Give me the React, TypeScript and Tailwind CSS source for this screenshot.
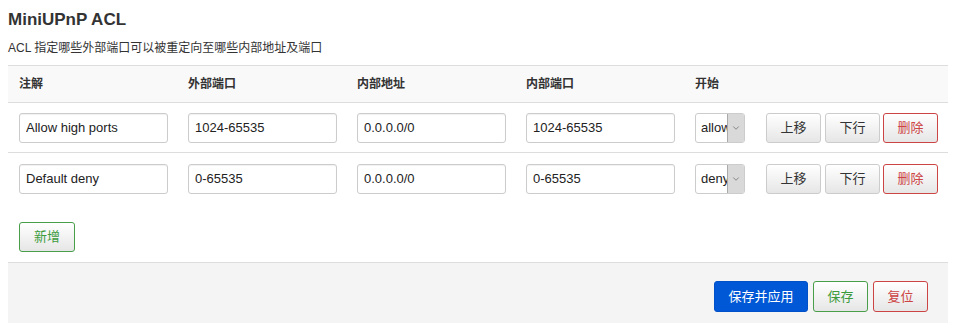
import { ChevronDown } from "lucide-react";

type Rule = { comment: string; extPort: string; intAddr: string; intPort: string; action: string };

const rules: Rule[] = [
  { comment: "Allow high ports", extPort: "1024-65535", intAddr: "0.0.0.0/0", intPort: "1024-65535", action: "allow" },
  { comment: "Default deny", extPort: "0-65535", intAddr: "0.0.0.0/0", intPort: "0-65535", action: "deny" },
];

const font = "font-['Liberation_Sans','Noto_Sans_CJK_SC',sans-serif]";
const grid = "grid grid-cols-[169px_169px_169px_169px_71px_1fr] pl-[11px]";
const inputCls =
  "h-[30px] w-[149px] rounded-[3px] border border-[#ccc] bg-white px-[6px] text-[13px] text-[#222] shadow-[inset_0_1px_1px_rgba(0,0,0,0.06)] outline-none";
const btnBase =
  "h-[30px] w-[55px] rounded-[3px] border bg-gradient-to-b from-white to-[#e6e6e6] text-[13px]";

function TextCell({ value }: { value: string }) {
  return <input className={inputCls} defaultValue={value} readOnly />;
}

function Row({ rule, last }: { rule: Rule; last?: boolean }) {
  return (
    <div className={`${grid} items-center ${last ? "h-[51px]" : "h-[50px] border-b border-[#ddd]"}`}>
      <TextCell value={rule.comment} />
      <TextCell value={rule.extPort} />
      <TextCell value={rule.intAddr} />
      <TextCell value={rule.intPort} />
      <div className="flex h-[30px] w-[50px] overflow-hidden rounded-[3px] border border-[#ccc] bg-white">
        <span className="flex flex-1 items-center overflow-hidden whitespace-nowrap pl-[5px] text-[13px] text-[#222]">{rule.action}</span>
        <span className="flex w-[17px] shrink-0 items-center justify-center border-l border-[#aaa] bg-[#d9d9d9] text-[#555]">
          <ChevronDown size={10} strokeWidth={1.5} />
        </span>
      </div>
      <div className="flex gap-[4px]">
        <button className={`${btnBase} border-[#ccc] text-[#333]`}>上移</button>
        <button className={`${btnBase} border-[#ccc] text-[#333]`}>下行</button>
        <button className={`${btnBase} ml-[-1px] border-[#c44] text-[#c44]`}>删除</button>
      </div>
    </div>
  );
}

export default function App() {
  return (
    <div className={`${font} h-[323px] w-[955px] overflow-hidden bg-white pl-2 pr-[7px] pt-[9px] text-[#333]`}>
      <h2 className="text-[17px] font-bold leading-[22px] text-[#333]">MiniUPnP ACL</h2>
      <p className="mt-[9px] text-[12px] leading-[16px] text-[#333]">ACL 指定哪些外部端口可以被重定向至哪些内部地址及端口</p>

      <div className="mt-[9px]">
        <div className={`${grid} h-[38px] items-center border-y border-[#ddd] bg-[#f9f9f9] text-[12px] font-bold text-[#333]`}>
          <span>注解</span>
          <span>外部端口</span>
          <span>内部地址</span>
          <span>内部端口</span>
          <span>开始</span>
          <span />
        </div>
        {rules.map((r, i) => (
          <Row key={r.comment} rule={r} last={i === rules.length - 1} />
        ))}
        <div className="h-[58px] pl-[11px] pt-[18px]">
          <button className="h-[30px] w-[56px] rounded-[3px] border border-[#4a9e4a] bg-gradient-to-b from-white to-[#e6e6e6] text-[13px] text-[#3c9b3c]">
            新增
          </button>
        </div>
      </div>

      <div className="flex h-[70px] items-start justify-end gap-[5px] border-t border-[#ddd] bg-[#f4f4f4] pr-[20px] pt-[18px]">
        <button className="h-[31px] w-[94px] rounded-[3px] border border-[#0050c8] bg-[#0058d6] text-[13px] text-white">
          保存并应用
        </button>
        <button className="h-[31px] w-[55px] rounded-[3px] border border-[#4a9e4a] bg-gradient-to-b from-white to-[#e6e6e6] text-[13px] text-[#3c9b3c]">
          保存
        </button>
        <button className="h-[31px] w-[55px] rounded-[3px] border border-[#c44] bg-gradient-to-b from-white to-[#e6e6e6] text-[13px] text-[#c44]">
          复位
        </button>
      </div>
    </div>
  );
}
